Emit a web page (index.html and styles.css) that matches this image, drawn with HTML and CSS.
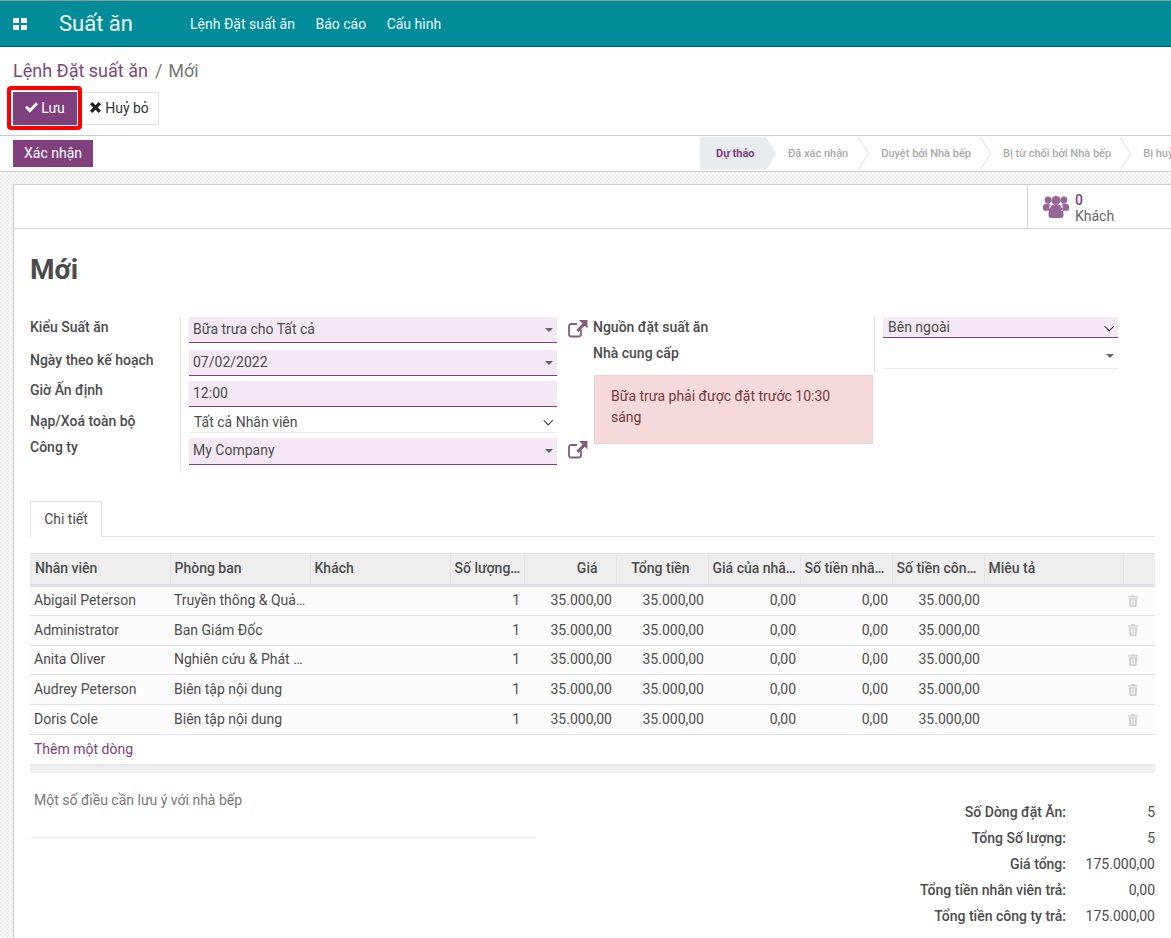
FILE: index.html
```html
<!DOCTYPE html>
<html lang="vi">
<head>
<meta charset="utf-8">
<title>Suất ăn</title>
<link rel="stylesheet" href="styles.css">
</head>
<body>
<nav class="navbar">
  <svg class="apps" width="14" height="12" viewBox="0 0 14 12"><path fill="#fff" d="M0 1a1 1 0 0 1 1-1h5v5H0zM8 0h5a1 1 0 0 1 1 1v4H8zM0 7h6v5H1a1 1 0 0 1-1-1zM8 7h6v4a1 1 0 0 1-1 1H8z"/></svg>
  <span class="brand">Suất ăn</span>
  <a class="nav-item">Lệnh Đặt suất ăn</a>
  <a class="nav-item">Báo cáo</a>
  <a class="nav-item">Cấu hình</a>
</nav>

<header class="control">
  <div class="crumbs"><a class="crumb-link">Lệnh Đặt suất ăn</a><span class="crumb-sep">/</span><span class="crumb-cur">Mới</span></div>
  <div class="actions">
    <button class="btn btn-primary btn-save">
      <svg width="13" height="11" viewBox="0 0 13 11"><path fill="#fff" d="M0 5.800 2 3.800 4.800 6.600 11 .2 13 2.200 4.800 10.700z"/></svg>Lưu
    </button>
    <button class="btn btn-light">
      <svg width="11" height="11" viewBox="0 0 10 10"><path fill="#222" d="M2.100 0 5 2.900 7.900 0 10 2.100 7.100 5 10 7.900 7.900 10 5 7.100 2.100 10 0 7.900 2.900 5 0 2.100z"/></svg>Huỷ bỏ
    </button>
    <span class="highlight"></span>
  </div>
</header>

<div class="statusbar">
  <button class="btn-confirm">Xác nhận</button>
  <div class="steps">
    <span class="step step-active">Dự thảo</span>
    <span class="step step-2">Đã xác nhận</span>
    <span class="step">Duyệt bởi Nhà bếp</span>
    <span class="step">Bị từ chối bởi Nhà bếp</span>
    <span class="step step-last">Bị huỷ</span>
  </div>
</div>

<main class="content">
  <section class="sheet">
    <div class="button-box">
      <div class="stat">
        <svg width="26" height="24" viewBox="0 0 26 24"><g fill="#9a6397"><circle cx="5" cy="5" r="3.400"/><circle cx="21" cy="5" r="3.400"/><circle cx="13" cy="5.500" r="4.600"/><path d="M0 11.500c0-2 1.500-2.800 3-2.800h4.200c-.6 1-.9 2-.9 3 0 1.600.6 3 1.500 4H1.500C.6 15.700 0 15 0 14zM26 11.500c0-2-1.500-2.800-3-2.800h-4.200c.6 1 .9 2 .9 3 0 1.600-.6 3-1.500 4h6.300c.9 0 1.500-.7 1.500-1.700zM8 11.500c0-1 1-1.500 2-1.500h6c1 0 2 .5 2 1.500 1.500 2 2.500 5 2.500 8.500 0 2-1 3-2.500 3H8c-1.500 0-2.500-1-2.500-3 0-3.500 1-6.500 2.500-8.500z"/></g></svg>
        <div class="stat-text"><span class="stat-num">0</span><span class="stat-label">Khách</span></div>
      </div>
    </div>

    <div class="form-body">
      <h1 class="title">Mới</h1>

      <div class="groups">
        <div class="group-left">
          <div class="labels">
            <label class="lbl lbl-1">Kiểu Suất ăn</label>
            <label class="lbl lbl-2">Ngày theo kế hoạch</label>
            <label class="lbl lbl-3">Giờ Ấn định</label>
            <label class="lbl lbl-4">Nạp/Xoá toàn bộ</label>
            <label class="lbl lbl-5">Công ty</label>
          </div>
          <div class="fields">
            <div class="row row-1">
              <div class="input req caret">Bữa trưa cho Tất cả</div>
              <svg class="ext" width="20" height="18" viewBox="0 0 20 18"><g fill="none" stroke="#875a7b" stroke-width="1.800"><path d="M13 9.500V14a2 2 0 0 1-2 2.500H3a2 2 0 0 1-2-2V6a2 2 0 0 1 2-2h6"/></g><path fill="#875a7b" d="M11 0h8.500v8.500l-2.700-2.700-6.300 6.300-2.200-2.200L14.600 3.600z"/></svg>
            </div>
            <div class="row row-2"><div class="input req caret">07/02/2022</div></div>
            <div class="row row-3"><div class="input req">12:00</div></div>
            <div class="row row-4"><div class="input sel chev">Tất cả Nhân viên</div></div>
            <div class="row row-5">
              <div class="input req caret">My Company</div>
              <svg class="ext" width="20" height="18" viewBox="0 0 20 18"><g fill="none" stroke="#875a7b" stroke-width="1.800"><path d="M13 9.500V14a2 2 0 0 1-2 2.500H3a2 2 0 0 1-2-2V6a2 2 0 0 1 2-2h6"/></g><path fill="#875a7b" d="M11 0h8.500v8.500l-2.700-2.700-6.300 6.300-2.200-2.200L14.600 3.600z"/></svg>
            </div>
          </div>
        </div>

        <div class="group-right">
          <div class="right-top">
            <div class="labels labels-right">
              <label class="lbl rlbl-1">Nguồn đặt suất ăn</label>
              <label class="lbl rlbl-2">Nhà cung cấp</label>
            </div>
            <div class="fields-right">
              <div class="input req-sel chev">Bên ngoài</div>
              <div class="input plain caret"></div>
            </div>
          </div>
          <div class="alert">Bữa trưa phải được đặt trước 10:30 sáng</div>
        </div>
      </div>

      <div class="tabs"><span class="tab">Chi tiết</span></div>

      <table class="lines">
        <colgroup>
          <col class="c140"><col class="c140"><col class="c140"><col class="c74"><col class="c92"><col class="c92"><col class="c92"><col class="c92"><col class="c92"><col class="c139"><col class="c32">
        </colgroup>
        <thead>
          <tr>
            <th>Nhân viên</th><th>Phòng ban</th><th>Khách</th><th>Số lượng…</th>
            <th class="num">Giá</th><th class="num">Tổng tiền</th><th>Giá của nhâ…</th><th>Số tiền nhâ…</th><th>Số tiền côn…</th><th>Miêu tả</th><th></th>
          </tr>
        </thead>
        <tbody>
          <tr><td>Abigail Peterson</td><td>Truyền thông &amp; Quả…</td><td></td><td class="num">1</td><td class="num">35.000,00</td><td class="num">35.000,00</td><td class="num">0,00</td><td class="num">0,00</td><td class="num">35.000,00</td><td></td><td class="trash"><svg width="10" height="12" viewBox="0 0 10 12"><path fill="#cfcfcf" fill-rule="evenodd" d="M3.500 0h3L7 1.200h3v1.300H0V1.200h3zM.8 3.200h8.400l-.5 8.100c0 .4-.3.700-.7.700H2c-.4 0-.7-.3-.7-.7zM3 4.500v6h.8v-6zm1.600 0v6h.8v-6zm1.600 0v6H7v-6z"/></svg></td></tr>
          <tr><td>Administrator</td><td>Ban Giám Đốc</td><td></td><td class="num">1</td><td class="num">35.000,00</td><td class="num">35.000,00</td><td class="num">0,00</td><td class="num">0,00</td><td class="num">35.000,00</td><td></td><td class="trash"><svg width="10" height="12" viewBox="0 0 10 12"><path fill="#cfcfcf" fill-rule="evenodd" d="M3.500 0h3L7 1.200h3v1.300H0V1.200h3zM.8 3.200h8.400l-.5 8.100c0 .4-.3.700-.7.700H2c-.4 0-.7-.3-.7-.7zM3 4.500v6h.8v-6zm1.600 0v6h.8v-6zm1.600 0v6H7v-6z"/></svg></td></tr>
          <tr><td>Anita Oliver</td><td>Nghiên cứu &amp; Phát …</td><td></td><td class="num">1</td><td class="num">35.000,00</td><td class="num">35.000,00</td><td class="num">0,00</td><td class="num">0,00</td><td class="num">35.000,00</td><td></td><td class="trash"><svg width="10" height="12" viewBox="0 0 10 12"><path fill="#cfcfcf" fill-rule="evenodd" d="M3.500 0h3L7 1.200h3v1.300H0V1.200h3zM.8 3.200h8.400l-.5 8.100c0 .4-.3.700-.7.700H2c-.4 0-.7-.3-.7-.7zM3 4.500v6h.8v-6zm1.600 0v6h.8v-6zm1.600 0v6H7v-6z"/></svg></td></tr>
          <tr><td>Audrey Peterson</td><td>Biên tập nội dung</td><td></td><td class="num">1</td><td class="num">35.000,00</td><td class="num">35.000,00</td><td class="num">0,00</td><td class="num">0,00</td><td class="num">35.000,00</td><td></td><td class="trash"><svg width="10" height="12" viewBox="0 0 10 12"><path fill="#cfcfcf" fill-rule="evenodd" d="M3.500 0h3L7 1.200h3v1.300H0V1.200h3zM.8 3.200h8.400l-.5 8.100c0 .4-.3.700-.7.700H2c-.4 0-.7-.3-.7-.7zM3 4.500v6h.8v-6zm1.600 0v6h.8v-6zm1.600 0v6H7v-6z"/></svg></td></tr>
          <tr><td>Doris Cole</td><td>Biên tập nội dung</td><td></td><td class="num">1</td><td class="num">35.000,00</td><td class="num">35.000,00</td><td class="num">0,00</td><td class="num">0,00</td><td class="num">35.000,00</td><td></td><td class="trash"><svg width="10" height="12" viewBox="0 0 10 12"><path fill="#cfcfcf" fill-rule="evenodd" d="M3.500 0h3L7 1.200h3v1.300H0V1.200h3zM.8 3.200h8.400l-.5 8.100c0 .4-.3.700-.7.700H2c-.4 0-.7-.3-.7-.7zM3 4.500v6h.8v-6zm1.600 0v6h.8v-6zm1.600 0v6H7v-6z"/></svg></td></tr>
          <tr class="add-row"><td colspan="11"><a class="add-link">Thêm một dòng</a></td></tr>
        </tbody>
      </table>
      <div class="table-foot"></div>

      <div class="bottom">
        <div class="note">Một số điều cần lưu ý với nhà bếp</div>
        <dl class="totals">
          <dt>Số Dòng đặt Ăn:</dt><dd>5</dd>
          <dt>Tổng Số lượng:</dt><dd>5</dd>
          <dt>Giá tổng:</dt><dd>175.000,00</dd>
          <dt>Tổng tiền nhân viên trả:</dt><dd>0,00</dd>
          <dt>Tổng tiền công ty trả:</dt><dd>175.000,00</dd>
        </dl>
      </div>
    </div>
  </section>
</main>
</body>
</html>
```

FILE: styles.css
```css
* { box-sizing: border-box; }
html, body { margin: 0; padding: 0; height: 938px; overflow: hidden; }
body { font-family: Roboto, "Noto Sans", sans-serif; font-size: 14px; color: #4c4c4c; background: #fff; width: 1171px; }

.navbar { height: 47px; background: #008c99; border-top: 1px solid #8f9a9b; border-bottom: 1px solid #045a63; display: flex; align-items: center; color: #fff; }
.apps { margin-left: 13px; flex: none; }
.brand { font-size: 22px; margin-left: 32px; margin-right: 57px; color: #f2fbfb; width: 74px; white-space: nowrap; }
.nav-item { margin-right: 20.500px; color: #eef9fa; white-space: nowrap; }

.control { height: 89px; padding: 12px 13px 0; border-bottom: 1px solid #ccc; }
.crumbs { font-size: 18px; height: 24px; line-height: 24px; display: flex; white-space: nowrap; }
.crumb-link { color: #7c4a7c; }
.crumb-sep { color: #777; margin: 0 6px 0 7px; }
.crumb-cur { color: #777; }
.actions { position: relative; display: flex; margin-top: 9px; }
.btn { height: 33px; border: 1px solid #dee2e6; font: 14px Roboto, sans-serif; display: flex; align-items: center; justify-content: center; gap: 3px; padding: 0 0 2px; }
.btn-primary { width: 64px; background: #803f7d; border-color: #803f7d; color: #fff; }
.btn-light { width: 78px; background: #fff; color: #333; gap: 4px; border-left: 0; margin-left: 4px; }
.highlight { position: absolute; left: -6px; top: -6px; width: 75px; height: 44px; border: 4px solid #f00; border-radius: 4px; pointer-events: none; }

.statusbar { height: 36px; border-bottom: 1px solid #ccc; display: flex; justify-content: space-between; align-items: flex-start; padding: 4px 0 0 13px; overflow: hidden; }
.btn-confirm { width: 80px; height: 27px; background: #803f7d; color: #fff; border: 0; font: 14px Roboto, sans-serif; padding: 0 0 1px; }
.steps { display: flex; height: 34px; margin-top: -3px; font-size: 11px; color: #a9a9a9; flex: none; width: 471px; overflow: hidden; }
.step { position: relative; display: flex; align-items: center; white-space: nowrap; padding: 0 9px 0 23px; height: 33px; font-weight: 500; }
.step::before, .step::after { content: ""; position: absolute; left: 100%; width: 11px; height: 17px; }
.step::before { top: 0; background: linear-gradient(to top right, transparent calc(50% - 1px), #dee2e6 50%, transparent calc(50% + 1px)); }
.step::after { bottom: 0; background: linear-gradient(to bottom right, transparent calc(50% - 1px), #dee2e6 50%, transparent calc(50% + 1px)); }
.step-active { width: 76px; flex: none; padding: 0 0 0 16px; color: #7c3f7d; font-weight: 700; background: #e9ecef; clip-path: polygon(0 0, 66px 0, 100% 50%, 66px 100%, 0 100%); }
.step-active::before, .step-active::after { display: none; }
.step-2 { margin-left: -10px; padding: 0 10px 0 22px; }
.step-last { padding-right: 0; }
.step-last::before, .step-last::after { display: none; }

.content { height: 766px; padding: 12px 0 0 13px; background-color: #f5f5f5; background-image: repeating-conic-gradient(#ececec 0 25%, #fcfcfc 0 50%); background-size: 4px 4px; }
.sheet { height: 100%; background: #fff; border: 1px solid #c9ccd2; border-right: 0; border-bottom: 0; }
.button-box { height: 44px; border-bottom: 1px solid #ced4da; display: flex; justify-content: flex-end; }
.stat { width: 144px; border-left: 1px solid #ced4da; display: flex; align-items: center; padding-left: 15px; gap: 6px; }
.stat-text { display: flex; flex-direction: column; line-height: 16px; padding-top: 2px; }
.stat-num { color: #7c3f7d; font-weight: 500; }
.stat-label { color: #666; }

.form-body { padding: 0 16px 0 16px; }
.title { margin: 21px 0 0; font-size: 28px; line-height: 39px; height: 39px; font-weight: 700; color: #4c4c4c; }

.groups { display: flex; margin-top: 28px; height: 184px; }
.group-left { display: flex; width: 563px; }
.labels { width: 151px; border-right: 1px solid #dee2e6; height: 154px; flex: none; }
.lbl { display: block; font-weight: 500; color: #4c4c4c; line-height: 16px; white-space: nowrap; }
.lbl-1 { margin-top: 2px; }
.lbl-2 { margin-top: 17px; }
.lbl-3 { margin-top: 14px; }
.lbl-4 { margin-top: 15px; }
.lbl-5 { margin-top: 10px; }
.fields { width: 399px; margin-left: 8px; flex: none; }
.row { display: flex; align-items: flex-start; }
.row-1 { margin-bottom: 7px; }
.row-2 { margin-bottom: 5px; }
.row-3 { margin-bottom: 4px; }
.row-4 { margin-bottom: 5px; }
.input { width: 368px; height: 26px; line-height: 24px; padding-left: 4px; color: #4c4c4c; position: relative; flex: none; white-space: nowrap; }
.req { background: #f5e8f5; border-bottom: 1px solid #7c3f7d; }
.row-5 .input { height: 27px; }
.sel { height: 22px; line-height: 22px; border-bottom: 1px solid #e9ecef; padding-left: 5px; }
.caret::after { content: ""; position: absolute; right: 4px; top: 11px; border: 4px solid transparent; border-top: 4px solid #666; border-bottom: 0; }
.chev::after { content: ""; position: absolute; right: 6px; top: 6px; width: 5.500px; height: 5.500px; border-right: 1.800px solid #222; border-bottom: 1.800px solid #222; transform: rotate(45deg); }
.ext { margin-left: 11px; margin-top: 3px; flex: none; }

.group-right { width: 525px; }
.right-top { display: flex; height: 56px; }
.labels-right { width: 282px; height: 56px; }
.rlbl-1 { margin-top: 2px; }
.rlbl-2 { margin-top: 10px; }
.fields-right { margin-left: 8px; width: 235px; }
.req-sel { width: 235px; height: 21px; line-height: 20px; background: #f5e8f5; border-bottom: 1px solid #7c3f7d; padding-left: 5px; }
.plain { width: 235px; height: 25px; margin-top: 6px; border-bottom: 1px solid #e9ecef; }
.fields-right .caret::after { right: 4px; top: 10px; }
.alert { width: 279px; height: 69px; margin: 2px 0 0 1px; padding: 10px 16px; background: #f5dadb; border: 1px solid #f2cfd0; color: #76393c; line-height: 21px; }

.tabs { height: 36px; border-bottom: 1px solid #dee2e6; display: flex; }
.tab { width: 72px; height: 36px; border: 1px solid #dee2e6; border-bottom: 1px solid #fff; background: #fff; display: flex; align-items: center; justify-content: center; color: #4c4c4c; }

.lines { width: 1125px; margin-top: 16px; table-layout: fixed; border-collapse: collapse; }
.c140 { width: 140px; }
.c74 { width: 74px; }
.c92 { width: 92px; }
.c139 { width: 139px; }
.c32 { width: 32px; }
.lines th { height: 32px; background: #eee; text-align: left; font-weight: 500; padding: 0 4px 3px 4px; border-top: 1px solid #dee2e6; border-bottom: 3px solid #dee2e6; border-left: 1px solid #dee2e6; white-space: nowrap; overflow: hidden; color: #4c4c4c; }
.lines th:first-child { border-left: 0; padding-left: 5px; }
.lines th.num { text-align: right; padding-right: 18px; }
.lines td { height: 29.800px; padding: 0 4px 1px; background: #fcfcfc; border-bottom: 1px solid #dee2e6; white-space: nowrap; overflow: hidden; }
.lines td.num { text-align: right; }
.lines td.trash { text-align: center; padding: 2px 12px 0 0; }
.add-row td { background: #fff; height: 30px; }
.add-link { color: #7c3f7d; }
.table-foot { height: 8px; background: #eee; width: 1125px; }

.bottom { display: flex; justify-content: space-between; align-items: flex-start; }
.note { width: 506px; height: 50px; margin-top: 15px; padding: 2px 4px 0; color: #777; border-bottom: 1px solid #e9ecef; line-height: 20px; }
.totals { margin: 26px 0 0; display: grid; grid-template-columns: auto 89px; grid-auto-rows: 26px; line-height: 26px; }
.totals dt { text-align: right; font-weight: 500; white-space: nowrap; }
.totals dd { margin: 0; text-align: right; }
```
